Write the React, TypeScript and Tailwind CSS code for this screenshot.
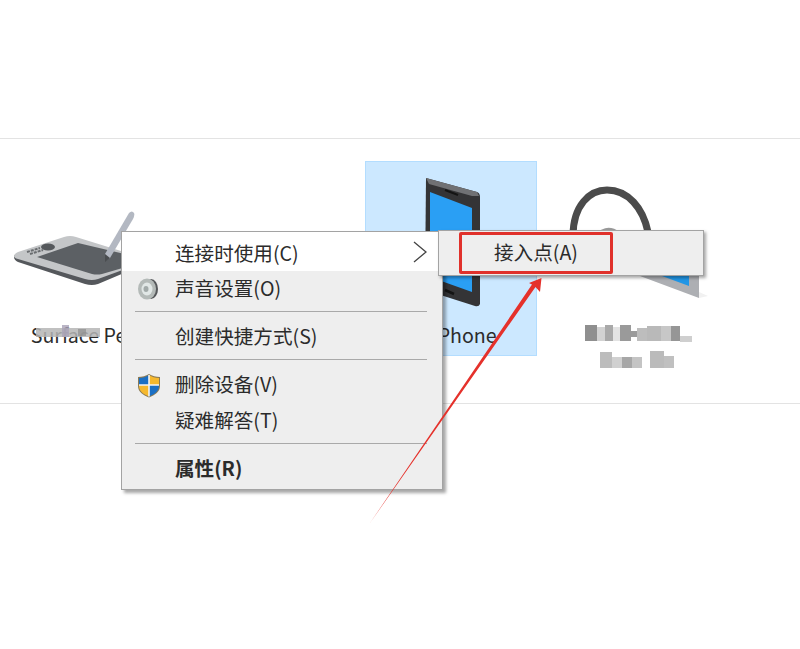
const font = { fontFamily: '"Noto Sans CJK SC", "Noto Sans", sans-serif' };

function Tablet() {
  return (
    <svg viewBox="-9 161 172 150" className="w-[172px] h-[150px] block">
      <path d="M14 257 Q14 254 18 253 L64 238 Q70 236 76 238 L150 262 L98 284 Q92 286 85 284 L18 262 Q14 260 14 257 Z" fill="#55585c" />
      <path d="M14 256 Q14 254 18 252 L64 237 Q70 235 76 237 L150 260 L98 279 Q92 281 85 279 L18 259 Q14 258 14 256 Z" fill="#c4c6c8" />
      <path d="M37 257 L78 243 L150 260 L102 274 Q97 275 92 274 Z" fill="#5c6064" />
      <ellipse cx="48" cy="247" rx="7" ry="3.5" fill="#55585c" />
      <path d="M27 252 L40 248 M30 254 L43 250" stroke="#6a6d70" strokeWidth="2" strokeDasharray="3 1" />
      <path d="M129 213 Q132 210 134 213 Q135 215 133 219 L110 258 L105 261 L105 254 Z" fill="#b3b8c2" />
      <path d="M105 254 L110 258 L105 262 Z" fill="#4a4d50" />
    </svg>
  );
}

function Phone() {
  return (
    <svg viewBox="365 161 172 150" className="w-[172px] h-[150px] block">
      <path d="M426 178 L477 192 Q480 193 480 197 L480 304 Q479 307 475 306 L428 291 Q425 290 425 286 Z" fill="#343436" />
      <path d="M426 178 L477 192 L479 196 L472 196 L429 184 Z" fill="#707174" />
      <path d="M430 192 L472 208 L472 292 L430 277 Z" fill="#2a9ff4" />
      <path d="M445 190 L458 195" stroke="#141414" strokeWidth="2" />
      <path d="M445 290 L454 294" stroke="#141414" strokeWidth="2.5" />
    </svg>
  );
}

function Headset() {
  return (
    <svg viewBox="552 161 172 150" className="w-[172px] h-[150px] block">
      <path d="M573 236 C573 205 590 190 607 190 C628 190 643 208 648 232" fill="none" stroke="#4b4b4b" strokeWidth="7" />
      <path d="M596 235 Q606 222 620 232 L620 250 L596 250 Z" fill="#9a9a9a" />
      <path d="M640 276 L699 276 L699 298 Z" fill="#adafb3" />
      <path d="M662 276 L689 276 L689 286 Z" fill="#2196e6" />
      <path d="M699 298 L708 296 L699 292 Z" fill="#f1f1f1" />
    </svg>
  );
}

function Speaker() {
  return (
    <svg viewBox="0 0 22 24" className="w-[22px] h-[24px] block">
      <ellipse cx="14" cy="12" rx="7" ry="10" fill="#55575a" />
      <ellipse cx="10" cy="12" rx="9" ry="10.5" fill="#b4bab8" />
      <ellipse cx="10" cy="12" rx="5.5" ry="6.5" fill="#e1e7e6" />
      <ellipse cx="9" cy="12" rx="2.5" ry="3" fill="#a2aaa9" />
    </svg>
  );
}

function Shield() {
  return (
    <svg viewBox="0 0 24 25" className="w-[24px] h-[25px] block">
      <path d="M12 1 C9 3 5 4 1 4 L1 13 C1 19 6 22 12 24.5 C18 22 23 19 23 13 L23 4 C19 4 15 3 12 1 Z" fill="#8a7a55" />
      <path d="M12 2 C9 4 6 5 2 5 L2 12 L12 12 Z" fill="#1b6fc4" />
      <path d="M12 2 C15 4 18 5 22 5 L22 12 L12 12 Z" fill="#f5b82e" />
      <path d="M2 12 L12 12 L12 23.5 C6 21 2 18 2 13 Z" fill="#f5b82e" />
      <path d="M22 12 L12 12 L12 23.5 C18 21 22 18 22 13 Z" fill="#1b6fc4" />
      <path d="M12 2 L12 23.5 M2 12 L22 12" stroke="#f3f3f3" strokeWidth="1.6" />
    </svg>
  );
}

function Row({ children, icon, bold }: { children: string; icon?: React.ReactNode; bold?: boolean }) {
  return (
    <div className="h-[36px] flex items-center">
      <div className="w-[53px] pl-[15px] shrink-0">{icon}</div>
      <span className={bold ? "font-bold pb-[2px]" : "pb-[2px]"}>{children}</span>
    </div>
  );
}

function Sep() {
  return (
    <div className="h-[12px] pt-[4px] pl-[13px] pr-[15px]">
      <div className="h-px bg-[#a9a9a9]" />
    </div>
  );
}

const mosaicA = [
  [585, 325, 12, 16, "#8f8f8f"], [597, 327, 8, 14, "#d2d2d2"], [605, 325, 8, 16, "#a9a9a9"], [613, 327, 7, 14, "#e3e3e3"],
  [620, 325, 11, 16, "#9a9a9a"], [631, 331, 6, 6, "#9b9b9b"], [637, 328, 10, 13, "#bdbdbd"], [647, 326, 14, 15, "#b9b9b9"],
  [661, 326, 10, 15, "#c7c7c7"], [671, 326, 9, 15, "#969696"], [680, 336, 12, 6, "#cfcfcf"], [600, 352, 12, 16, "#bcbcbc"],
  [612, 357, 10, 11, "#d0d0d0"], [622, 357, 10, 11, "#a7a7a7"], [632, 357, 10, 11, "#c4c4c4"], [650, 351, 14, 17, "#bbbbbb"],
  [664, 356, 10, 12, "#c0c0c0"],
] as const;

function Mosaic() {
  return (
    <svg viewBox="552 320 172 55" className="absolute left-[552px] top-[320px] w-[172px] h-[55px]">
      {mosaicA.map(([x, y, w, h, c], i) => (
        <rect key={i} x={x} y={y} width={w} height={h} fill={c} />
      ))}
    </svg>
  );
}

export default function App() {
  return (
    <div className="relative w-[800px] h-[649px] bg-white overflow-hidden text-[#2b2b2b] text-[19.6px]" style={font}>
      <div className="h-[138px] border-b border-[#e3e3e3] box-content" />
      <div className="h-[243px] border-b border-[#e3e3e3] box-content pt-[22px] -mt-px">
        <div className="flex gap-[15px] -ml-[9px] pt-px">
          <div className="w-[172px] h-[195px] shrink-0">
            <Tablet />
            <div className="mt-[11px] leading-[25px] pl-[15px] text-center whitespace-nowrap">Surface Pen</div>
          </div>
          <div className="w-[172px] h-[195px] shrink-0" />
          <div className="w-[172px] h-[195px] shrink-0 bg-[#cce8ff] border border-[#99d1ff]/50">
            <div className="-m-px">
              <Phone />
              <div className="mt-[11px] leading-[25px] pl-[27px] text-center">iPhone</div>
            </div>
          </div>
          <div className="w-[172px] h-[195px] shrink-0">
            <Headset />
          </div>
        </div>
      </div>

      <svg viewBox="0 0 800 30" className="absolute left-0 top-[320px] w-[800px] h-[30px]">
        <rect x="36" y="8" width="64" height="9" fill="#b5b5b5" opacity="0.85" />
        <rect x="62" y="5" width="7" height="12" fill="#a9a2b8" opacity="0.8" />
        <rect x="78" y="9" width="8" height="7" fill="#8f8f8f" opacity="0.7" />
      </svg>
      <Mosaic />

      <div className="absolute left-[121px] top-[231px] w-[322px] h-[259px] bg-[#eeeeee] border border-[#a3a3a3] shadow-[3px_3px_3px_rgba(0,0,0,0.35)]">
        <div className="h-[39px] bg-white flex items-center pt-[3px]">
          <div className="w-[53px] shrink-0" />
          <span className="pb-[1px]">连接时使用(C)</span>
          <svg viewBox="0 0 14 22" className="w-[14px] h-[22px] ml-auto mr-[15px] -mt-[3px]">
            <path d="M1 1 L13 11 L1 21" fill="none" stroke="#444" strokeWidth="1.3" />
          </svg>
        </div>
        <Row icon={<Speaker />}>声音设置(O)</Row>
        <Sep />
        <Row>创建快捷方式(S)</Row>
        <Sep />
        <Row icon={<Shield />}>删除设备(V)</Row>
        <Row>疑难解答(T)</Row>
        <Sep />
        <Row bold>属性(R)</Row>
      </div>

      <div className="absolute left-[438px] top-[230px] w-[266px] h-[46px] bg-[#eeeeee] border border-[#a3a3a3] shadow-[2px_2px_3px_rgba(0,0,0,0.35)] pl-[20px] pt-px">
        <div className="w-[154px] h-[42px] border-[3px] border-[#e0312b] rounded-[2px] flex items-center justify-center pb-[2px]">
          接入点(A)
        </div>
      </div>

      <svg viewBox="0 0 800 649" className="absolute inset-0 w-[800px] h-[649px] pointer-events-none">
        <path d="M541.5 278 L540 292 L535.5 287 L370 523 L532 284.5 L529 283 Z" fill="#e5312b" />
      </svg>
    </div>
  );
}
